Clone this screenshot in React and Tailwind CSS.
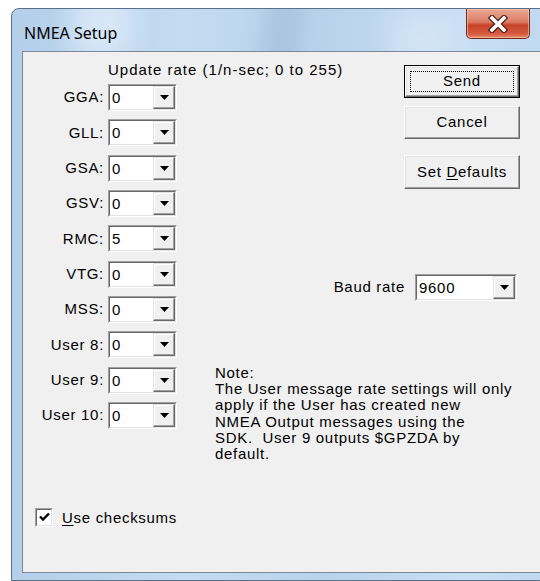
import React from "react";

const rates = [
  ["GGA:", "0"],
  ["GLL:", "0"],
  ["GSA:", "0"],
  ["GSV:", "0"],
  ["RMC:", "5"],
  ["VTG:", "0"],
  ["MSS:", "0"],
  ["User 8:", "0"],
  ["User 9:", "0"],
  ["User 10:", "0"],
];

function Arrow() {
  return (
    <svg width="9" height="5" viewBox="0 0 9 5">
      <path d="M0 0H9L4.5 5Z" fill="#000" />
    </svg>
  );
}

function Combo({ value, className }) {
  return (
    <div
      className={
        "flex h-[27px] border border-t-[#a0a0a0] border-l-[#a0a0a0] border-r-[#ffffff] border-b-[#ffffff] " +
        className
      }
    >
      <div className="flex flex-1 border border-t-[#696969] border-l-[#696969] border-r-[#e3e3e3] border-b-[#e3e3e3] bg-white">
        <div className="flex-1 pl-[2px] leading-[23px] text-black">{value}</div>
        <div className="flex w-[22px] items-center justify-center bg-[#f0f0f0] border border-t-[#e3e3e3] border-l-[#e3e3e3] border-r-[#696969] border-b-[#696969] shadow-[inset_-1px_-1px_0_#a0a0a0,inset_1px_1px_0_#ffffff]">
          <Arrow />
        </div>
      </div>
    </div>
  );
}

function PushButton({ children, isDefault, className }) {
  if (isDefault) {
    return (
      <div className={"border border-black " + className}>
        <div className="flex h-full items-center justify-center border border-t-[#ffffff] border-l-[#ffffff] border-r-[#696969] border-b-[#696969] bg-[#f0f0f0] shadow-[inset_-1px_-1px_0_#a0a0a0,inset_1px_1px_0_#e3e3e3]">
          <div className="flex h-[calc(100%-8px)] w-[calc(100%-8px)] items-center justify-center border border-dotted border-black">
            {children}
          </div>
        </div>
      </div>
    );
  }
  return (
    <div
      className={
        "flex items-center justify-center border border-t-[#ffffff] border-l-[#ffffff] border-r-[#696969] border-b-[#696969] bg-[#f0f0f0] shadow-[inset_-1px_-1px_0_#a0a0a0,inset_1px_1px_0_#e3e3e3] " +
        className
      }
    >
      {children}
    </div>
  );
}

function CloseButton() {
  return (
    <div className="flex h-[30px] w-[64px] items-center justify-center rounded-b-[5px] border border-t-0 border-[#6e2c20] bg-[linear-gradient(180deg,#e9a996_0%,#dc7a62_45%,#c6432a_55%,#d55a3e_85%,#e98a6a_100%)] shadow-[inset_0_0_0_1px_rgba(255,210,190,0.55)]">
      <svg width="22" height="18" viewBox="0 0 22 18">
        <path
          d="M5 3L17 15M17 3L5 15"
          stroke="#4a1d14"
          strokeWidth="6"
          strokeLinecap="square"
        />
        <path
          d="M5 3L17 15M17 3L5 15"
          stroke="#ffffff"
          strokeWidth="3.6"
          strokeLinecap="square"
        />
      </svg>
    </div>
  );
}

export default function App() {
  return (
    <div className="h-[581px] w-[540px] overflow-hidden bg-white pl-[11px] pt-[8px]">
      <div className="relative flex h-[573px] w-[570px] flex-col overflow-hidden rounded-tl-[8px] border border-[#5a6f88] bg-[linear-gradient(90deg,#b4cfea_0%,#c4dbf1_30%,#b9d2ec_55%,#c8def3_80%,#bdd6ef_100%)]">
        {/* glass streaks in the frame */}
        <div className="pointer-events-none absolute left-[250px] top-[-10px] h-[70px] w-[40px] rotate-[8deg] bg-[#9fb9d6] opacity-60 blur-[10px]" />
        <div className="pointer-events-none absolute left-[60px] top-[-20px] h-[70px] w-[60px] bg-[#e2eefa] opacity-70 blur-[12px]" />
        <div className="pointer-events-none absolute left-[380px] top-[5px] h-[50px] w-[60px] bg-[#dcebf9] opacity-60 blur-[12px]" />

        {/* title bar */}
        <div className="relative flex h-[42px] items-start">
          <div
            className="pl-[12px] pt-[14px] text-[16px] leading-[20px] text-black"
            style={{ fontFamily: '"Noto Sans", "Open Sans", sans-serif' }}
          >
            NMEA Setup
          </div>
          <div className="ml-auto mr-[50px]">
            <CloseButton />
          </div>
        </div>

        {/* client area */}
        <div
          className="relative mb-[7px] ml-[10px] flex flex-1 border border-r-0 border-[#7c8898] bg-[#f0f0f0] text-[15px] tracking-[0.7px] text-black"
          style={{ fontFamily: '"Liberation Sans", Arial, sans-serif' }}
        >
          <div className="flex w-[154px] shrink-0 flex-col">
            <div className="ml-[85px] mt-[9px] whitespace-nowrap leading-[17px] tracking-[1px]">
              Update rate (1/n-sec; 0 to 255)
            </div>
            <div className="mt-[6px] flex flex-col gap-[8.33px]">
              {rates.map(([label, value]) => (
                <div key={label} className="flex items-center">
                  <div className="w-[85px] whitespace-nowrap pr-[4px] text-right">
                    {label}
                  </div>
                  <Combo value={value} className="w-[69px]" />
                </div>
              ))}
            </div>
            <div className="ml-[12px] mt-[79px] flex items-center gap-[9px]">
              <div className="flex h-[19px] w-[19px] items-center justify-center border border-t-[#a0a0a0] border-l-[#a0a0a0] border-r-[#ffffff] border-b-[#ffffff]">
                <div className="flex h-full w-full items-center justify-center border border-t-[#696969] border-l-[#696969] border-r-[#e3e3e3] border-b-[#e3e3e3] bg-white">
                  <svg width="11" height="10" viewBox="0 0 11 10">
                    <path d="M1 4.5L4 7.5L10 1.5" stroke="#000" strokeWidth="2.4" fill="none" />
                  </svg>
                </div>
              </div>
              <div className="whitespace-nowrap leading-[17px]">
                <span className="underline underline-offset-2">U</span>se checksums
              </div>
            </div>
          </div>

          <div className="flex w-[343px] shrink-0 flex-col items-end">
            <div className="mt-[13px] flex w-[116px] flex-col">
              <PushButton isDefault className="h-[33px] w-[116px]">
                Send
              </PushButton>
              <PushButton className="mt-[8px] h-[33px] w-[116px]">Cancel</PushButton>
              <PushButton className="mt-[16px] h-[34px] w-[116px]">
                <span>
                  Set <span className="underline underline-offset-2">D</span>efaults
                </span>
              </PushButton>
            </div>
            <div className="mr-[3px] mt-[85px] flex items-center">
              <div className="mr-[10px] whitespace-nowrap">Baud rate</div>
              <Combo value="9600" className="w-[102px]" />
            </div>
            <div className="mt-[64px] self-start pl-[38px] leading-[16.2px]">
              Note:
              <br />
              The User message rate settings will only
              <br />
              apply if the User has created new
              <br />
              NMEA Output messages using the
              <br />
              SDK.&nbsp; User 9 outputs $GPZDA by
              <br />
              default.
            </div>
          </div>
        </div>
      </div>
    </div>
  );
}
